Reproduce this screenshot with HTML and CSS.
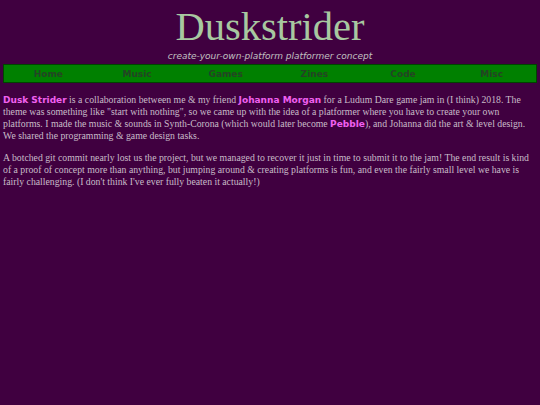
FILE: index.html
```html
<!DOCTYPE html>
<html>
<head>
<meta charset="utf-8">
<link rel="stylesheet" href="styles.css">
</head>
<body>
<header class="masthead">
  <h1 class="title">Duskstrider</h1>
  <p class="subtitle">create-your-own-platform platformer concept</p>
</header>
<nav class="nav">
  <a class="nav-item" href="#">Home</a>
  <a class="nav-item" href="#">Music</a>
  <a class="nav-item" href="#">Games</a>
  <a class="nav-item" href="#">Zines</a>
  <a class="nav-item" href="#">Code</a>
  <a class="nav-item" href="#">Misc</a>
</nav>
<main class="content">
  <p><a class="link" href="#">Dusk Strider</a> is a collaboration between me &amp; my friend <a class="link" href="#">Johanna Morgan</a> for a Ludum Dare game jam in (I think) 2018. The<br>theme was something like "start with nothing", so we came up with the idea of a platformer where you have to create your own<br>platforms. I made the music &amp; sounds in Synth-Corona (which would later become <a class="link" href="#">Pebble</a>), and Johanna did the art &amp; level design.<br>We shared the programming &amp; game design tasks.</p>
  <p>A botched git commit nearly lost us the project, but we managed to recover it just in time to submit it to the jam! The end result is kind<br>of a proof of concept more than anything, but jumping around &amp; creating platforms is fun, and even the fairly small level we have is<br>fairly challenging. (I don't think I've ever fully beaten it actually!)</p>
</main>
</body>
</html>
```
FILE: styles.css
```css
html, body {
  background: #400040;
}
body {
  margin: 0;
  padding: 0 3px;
  font-family: "Liberation Serif", serif;
  color: #c8bcc8;
}
.masthead {
  text-align: center;
}
.title {
  margin: 0;
  padding-top: 5px;
  font-family: "Liberation Serif", serif;
  font-weight: normal;
  font-size: 40.5px;
  line-height: 44px;
  color: #a8c8a0;
}
.subtitle {
  margin: 0;
  font-family: "DejaVu Sans", sans-serif;
  font-style: italic;
  font-size: 9px;
  line-height: 14px;
  color: #c0c0c0;
}
.nav {
  display: flex;
  margin-top: 1px;
  background: #008000;
  border: 1px solid #004400;
  height: 17px;
  align-items: center;
}
.nav-item {
  flex: 1;
  text-align: center;
  font-family: "DejaVu Sans", sans-serif;
  font-weight: bold;
  font-size: 9px;
  color: #244424;
  text-decoration: none;
}
.content {
  padding-top: 5px;
}
.content p {
  margin: 6px 0 10px;
  font-size: 9.75px;
  line-height: 12px;
  white-space: nowrap;
}
.link {
  font-family: "DejaVu Sans", sans-serif;
  font-weight: bold;
  font-size: 9px;
  color: #f060f0;
  text-decoration: none;
}
```
